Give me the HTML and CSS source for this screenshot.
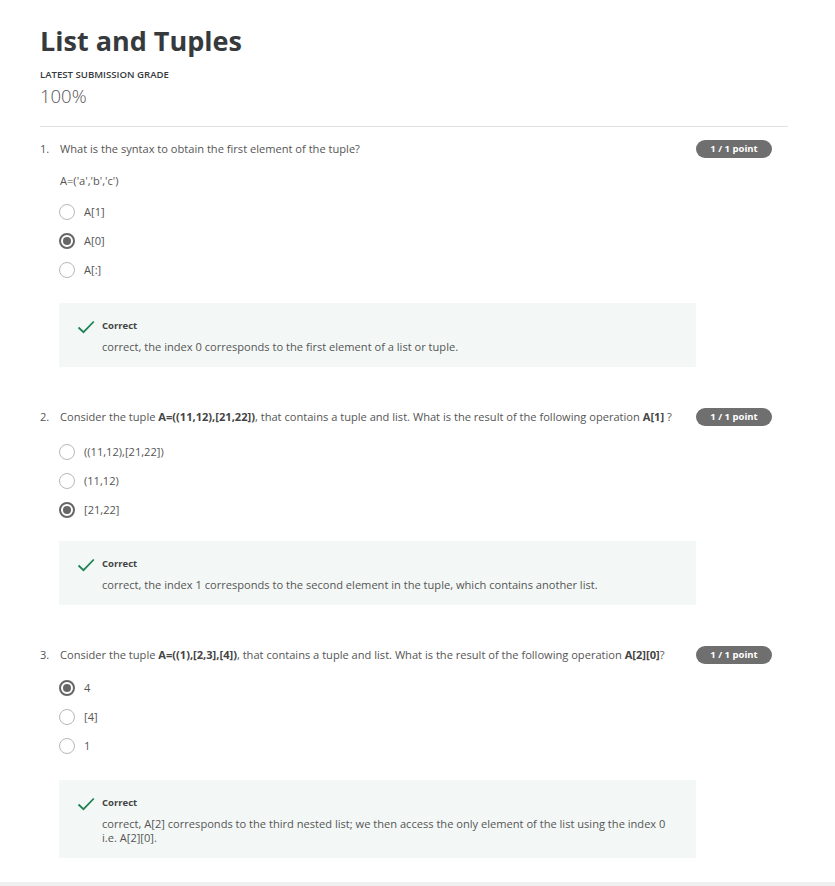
FILE: index.html
```html
<!DOCTYPE html>
<html>
<head>
<meta charset="utf-8">
<link rel="stylesheet" href="styles.css">
</head>
<body>
<div class="page">
  <h1 class="title">List and Tuples</h1>
  <div class="grade-label">LATEST SUBMISSION GRADE</div>
  <div class="grade">100%</div>
  <hr class="rule">

  <div class="question q1">
    <div class="num">1.</div>
    <div class="body">
      <div class="prompt">What is the syntax to obtain the first element of the tuple?</div>
      <div class="code">A=('a','b','c')</div>
      <div class="options">
        <div class="opt"><span class="radio"></span><span>A[1]</span></div>
        <div class="opt"><span class="radio on"></span><span>A[0]</span></div>
        <div class="opt"><span class="radio"></span><span>A[:]</span></div>
      </div>
      <div class="feedback">
        <svg class="check" viewBox="0 0 18 14" width="18" height="14"><path d="M1.5 7.5 L6.5 12.2 L16.8 1.5" fill="none" stroke="#1f8354" stroke-width="1.8"/></svg>
        <div class="fb-text">
          <div class="fb-title">Correct</div>
          <div class="fb-msg">correct, the index 0 corresponds to the first element of a list or tuple.</div>
        </div>
      </div>
    </div>
    <div class="badge">1 / 1 point</div>
  </div>

  <div class="question q2">
    <div class="num">2.</div>
    <div class="body">
      <div class="prompt">Consider the tuple <b>A=((11,12),[21,22])</b>, that contains a tuple and list. What is the result of the following operation <b>A[1]</b> ?</div>
      <div class="options">
        <div class="opt"><span class="radio"></span><span>((11,12),[21,22])</span></div>
        <div class="opt"><span class="radio"></span><span>(11,12)</span></div>
        <div class="opt"><span class="radio on"></span><span>[21,22]</span></div>
      </div>
      <div class="feedback">
        <svg class="check" viewBox="0 0 18 14" width="18" height="14"><path d="M1.5 7.5 L6.5 12.2 L16.8 1.5" fill="none" stroke="#1f8354" stroke-width="1.8"/></svg>
        <div class="fb-text">
          <div class="fb-title">Correct</div>
          <div class="fb-msg">correct, the index 1 corresponds to the second element in the tuple, which contains another list.</div>
        </div>
      </div>
    </div>
    <div class="badge">1 / 1 point</div>
  </div>

  <div class="question q3">
    <div class="num">3.</div>
    <div class="body">
      <div class="prompt">Consider the tuple <b>A=((1),[2,3],[4])</b>, that contains a tuple and list. What is the result of the following operation <b>A[2][0]</b>?</div>
      <div class="options">
        <div class="opt"><span class="radio on"></span><span>4</span></div>
        <div class="opt"><span class="radio"></span><span>[4]</span></div>
        <div class="opt"><span class="radio"></span><span>1</span></div>
      </div>
      <div class="feedback">
        <svg class="check" viewBox="0 0 18 14" width="18" height="14"><path d="M1.5 7.5 L6.5 12.2 L16.8 1.5" fill="none" stroke="#1f8354" stroke-width="1.8"/></svg>
        <div class="fb-text">
          <div class="fb-title">Correct</div>
          <div class="fb-msg">correct, A[2] corresponds to the third nested list; we then access the only element of the list using the index 0 i.e. A[2][0].</div>
        </div>
      </div>
    </div>
    <div class="badge">1 / 1 point</div>
  </div>
</div>
<div class="footer-bar"></div>
</body>
</html>
```
FILE: styles.css
```css
html, body {
  margin: 0;
  padding: 0;
  background: #ffffff;
}
body {
  font-family: "Open Sans", "Liberation Sans", sans-serif;
  color: #505050;
  width: 835px;
  height: 886px;
  overflow: hidden;
  position: relative;
}
.page {
  padding: 22px 0 0 40px;
  width: 748px;
}
.title {
  margin: 0;
  font-size: 27px;
  line-height: 38px;
  font-weight: 700;
  color: #373a3c;
}
.grade-label {
  margin-top: 9px;
  font-size: 9.6px;
  line-height: 12px;
  font-weight: 600;
  color: #373a3c;
}
.grade {
  margin-top: 4px;
  font-size: 18.5px;
  line-height: 22px;
  font-weight: 300;
  color: #555;
}
.rule {
  margin: 19px 0 0 0;
  border: 0;
  border-top: 1px solid #e1e1e1;
  height: 0;
}
.question {
  display: grid;
  grid-template-columns: 19px 637px 76px;
  align-items: start;
  font-size: 11.1px;
  line-height: 14px;
}
.q1 { margin-top: 15px; }
.q2 { margin-top: 43px; }
.q3 { margin-top: 43px; }
.num {
  color: #555;
}
.prompt {
  color: #555;
  padding-left: 1px;
}
.prompt b {
  font-weight: 700;
  color: #444;
}
.badge {
  margin-top: -2px;
  width: 76px;
  height: 18px;
  border-radius: 9px;
  background: #6f6f6f;
  color: #fff;
  font-size: 9.5px;
  font-weight: 700;
  line-height: 18px;
  text-align: center;
}
.code {
  margin-top: 18px;
  padding-left: 1px;
  color: #555;
}
.options {
  display: flex;
  flex-direction: column;
  gap: 13px;
  margin-top: 16px;
}
.q2 .options { margin-top: 20px; }
.q3 .options { margin-top: 18px; }
.opt {
  display: flex;
  align-items: center;
  gap: 9px;
  height: 16px;
  color: #555;
}
.radio {
  box-sizing: border-box;
  width: 16px;
  height: 16px;
  border-radius: 50%;
  border: 1px solid #b8b8b8;
  background: #fff;
  flex: none;
  position: relative;
}
.radio.on {
  border: 2px solid #666;
}
.radio.on::after {
  content: "";
  position: absolute;
  left: 2px;
  top: 2px;
  width: 8px;
  height: 8px;
  border-radius: 50%;
  background: #666;
}
.feedback {
  margin-top: 23px;
  background: #f3f8f6;
  display: flex;
  gap: 7px;
  padding: 16px 16px 13px 18px;
}
.q1 .feedback { margin-top: 25px; }
.q3 .feedback { margin-top: 26px; }
.check {
  flex: none;
  margin-top: 1px;
}
.fb-title {
  font-size: 9.5px;
  font-weight: 700;
  line-height: 14px;
  color: #444;
}
.fb-msg {
  margin-top: 7px;
  color: #555;
  line-height: 14px;
}
.footer-bar {
  position: absolute;
  left: 0;
  right: 0;
  bottom: 0;
  height: 4px;
  background: #f0f0f0;
}
```
